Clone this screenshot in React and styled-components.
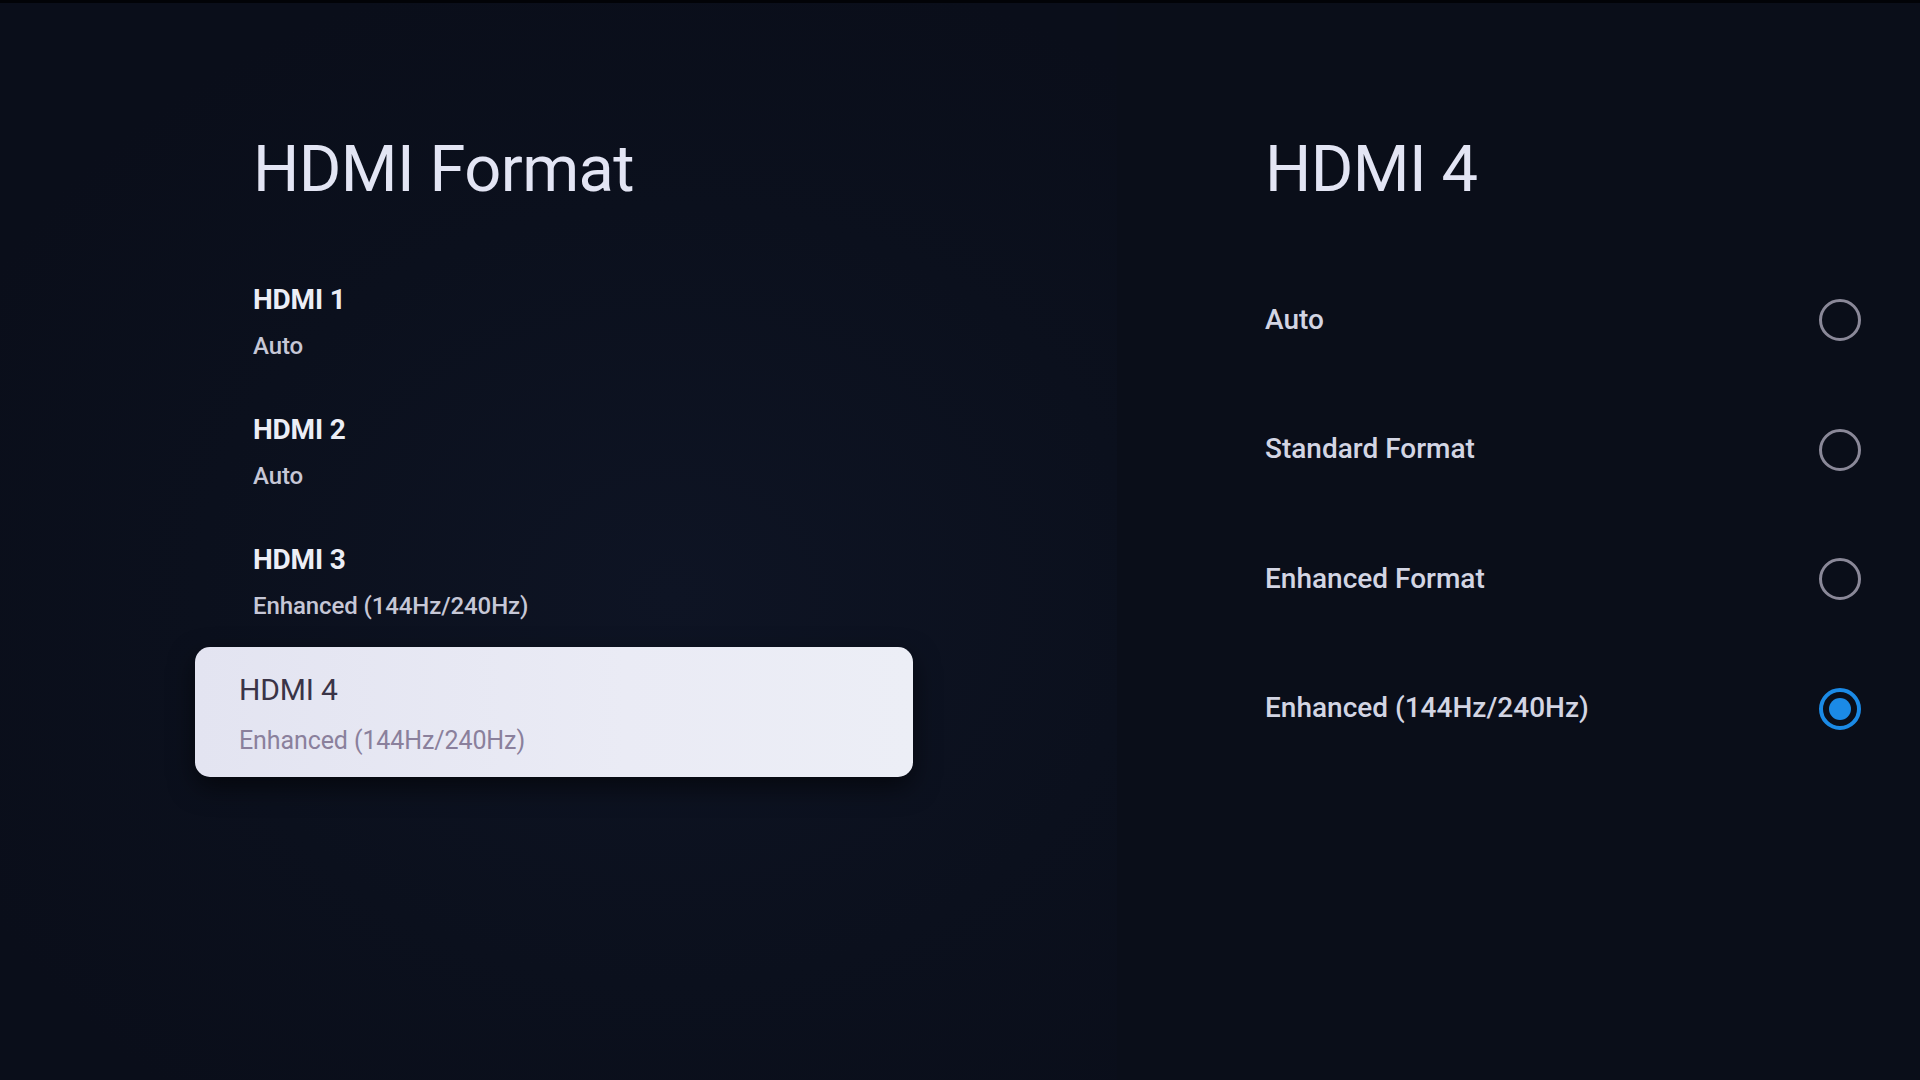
import React from "react";
import styled, { createGlobalStyle } from "styled-components";

const GlobalStyle = createGlobalStyle`
  html, body {
    margin: 0;
    padding: 0;
    background: #0a0e19;
  }
  body {
    font-family: Roboto, "Liberation Sans", sans-serif;
    -webkit-font-smoothing: antialiased;
  }
`;

const sources = [
  { name: "HDMI 1", value: "Auto" },
  { name: "HDMI 2", value: "Auto" },
  { name: "HDMI 3", value: "Enhanced (144Hz/240Hz)" },
  { name: "HDMI 4", value: "Enhanced (144Hz/240Hz)", focused: true },
];

const formats = [
  { label: "Auto" },
  { label: "Standard Format" },
  { label: "Enhanced Format" },
  { label: "Enhanced (144Hz/240Hz)", checked: true },
];

const Screen = styled.div`
  display: flex;
  width: 1920px;
  height: 1080px;
  overflow: hidden;
  border-top: 3px solid #020307;
  box-sizing: border-box;
  background: #0a0e19;
`;

const MainPanel = styled.section`
  width: 1117px;
  flex-shrink: 0;
  box-sizing: border-box;
  padding: 126px 204px 0 195px;
  background: radial-gradient(
    ellipse 70% 60% at 60% 55%,
    #0e1424 0%,
    #0b101d 60%,
    #0a0e1a 100%
  );
`;

const SidePanel = styled.section`
  flex: 1;
  box-sizing: border-box;
  padding: 126px 59px 0 148px;
  background: #0a0e19;
`;

const Title = styled.h1`
  margin: 0 0 ${(p) => p.$gap}px;
  padding-left: ${(p) => p.$indent}px;
  font-family: Roboto, "Liberation Sans", sans-serif;
  font-weight: 400;
  font-size: 65px;
  line-height: 80px;
  letter-spacing: -0.6px;
  color: #e3e5f4;
`;

const SourceList = styled.div`
  display: flex;
  flex-direction: column;
`;

const SourceItem = styled.div`
  height: 130px;
  box-sizing: border-box;
  padding: 24px 0 0 58px;
`;

const SourceName = styled.div`
  font-weight: 700;
  font-size: 28px;
  line-height: 36px;
  letter-spacing: -0.2px;
  color: #eceef6;
`;

const SourceValue = styled.div`
  margin-top: 11px;
  font-weight: 500;
  font-size: 24px;
  line-height: 34px;
  letter-spacing: -0.1px;
  color: #c6c7d6;
`;

const FocusCard = styled.div`
  height: 130px;
  margin-top: -1px;
  box-sizing: border-box;
  padding: 24px 0 0 44px;
  border-radius: 15px;
  background: linear-gradient(90deg, #e3e4f1 0%, #eaebf5 60%, #eceef6 100%);
  box-shadow: 0 10px 26px rgba(0, 0, 0, 0.55);
`;

const FocusName = styled.div`
  font-weight: 400;
  font-size: 30px;
  line-height: 38px;
  letter-spacing: -0.2px;
  color: #3a3447;
`;

const FocusValue = styled.div`
  margin-top: 15px;
  font-weight: 400;
  font-size: 25px;
  line-height: 34px;
  letter-spacing: -0.1px;
  color: #8a809c;
`;

const OptionList = styled.div`
  display: flex;
  flex-direction: column;
`;

const OptionRow = styled.div`
  height: 129.5px;
  display: flex;
  align-items: center;
  justify-content: space-between;
`;

const OptionLabel = styled.span`
  font-weight: 500;
  font-size: 28px;
  color: #d3d5e3;
`;

const Radio = styled.span`
  width: 42px;
  height: 42px;
  box-sizing: border-box;
  border-radius: 50%;
  border: ${(p) => (p.$checked ? "4px solid #1b8ae6" : "3px solid #8a8898")};
  display: flex;
  align-items: center;
  justify-content: center;
  margin-top: 2px;

  &::after {
    content: "";
    display: ${(p) => (p.$checked ? "block" : "none")};
    width: 22px;
    height: 22px;
    border-radius: 50%;
    background: #1b8ae6;
  }
`;

export default function App() {
  return (
    <>
      <GlobalStyle />
      <Screen>
        <MainPanel>
          <Title $indent={58} $gap={49}>
            HDMI Format
          </Title>
          <SourceList>
            {sources.map((s) =>
              s.focused ? (
                <FocusCard key={s.name}>
                  <FocusName>{s.name}</FocusName>
                  <FocusValue>{s.value}</FocusValue>
                </FocusCard>
              ) : (
                <SourceItem key={s.name}>
                  <SourceName>{s.name}</SourceName>
                  <SourceValue>{s.value}</SourceValue>
                </SourceItem>
              )
            )}
          </SourceList>
        </MainPanel>
        <SidePanel>
          <Title $indent={0} $gap={45.5}>
            HDMI 4
          </Title>
          <OptionList>
            {formats.map((f) => (
              <OptionRow key={f.label}>
                <OptionLabel>{f.label}</OptionLabel>
                <Radio $checked={f.checked} />
              </OptionRow>
            ))}
          </OptionList>
        </SidePanel>
      </Screen>
    </>
  );
}
